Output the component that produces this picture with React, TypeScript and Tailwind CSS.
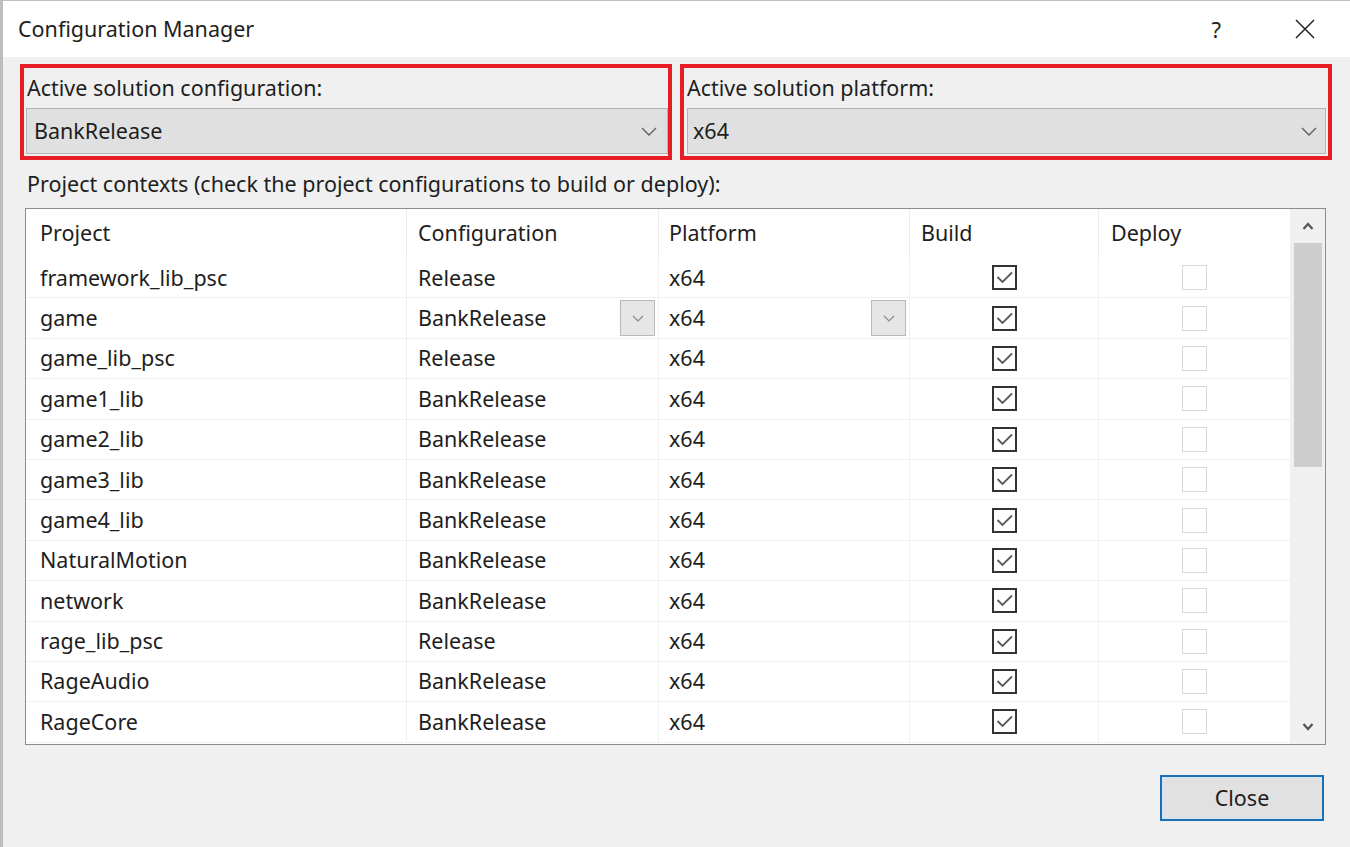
import React from "react";

const rows: [string, string][] = [
  ["framework_lib_psc", "Release"],
  ["game", "BankRelease"],
  ["game_lib_psc", "Release"],
  ["game1_lib", "BankRelease"],
  ["game2_lib", "BankRelease"],
  ["game3_lib", "BankRelease"],
  ["game4_lib", "BankRelease"],
  ["NaturalMotion", "BankRelease"],
  ["network", "BankRelease"],
  ["rage_lib_psc", "Release"],
  ["RageAudio", "BankRelease"],
  ["RageCore", "BankRelease"],
];

const font = { fontFamily: '"Noto Sans", "Open Sans", sans-serif' };

function Chevron() {
  return (
    <svg width="16" height="9" viewBox="0 0 16 9">
      <path d="M1 1 L8 8 L15 1" fill="none" stroke="#606060" strokeWidth="1.4" />
    </svg>
  );
}

function SmallChevron() {
  return (
    <svg width="12" height="7" viewBox="0 0 12 7">
      <path d="M1 1 L6 6 L11 1" fill="none" stroke="#8a8a8a" strokeWidth="1.2" />
    </svg>
  );
}

function CheckOn() {
  return (
    <div className="w-[25px] h-[25px] border-2 border-[#333333] bg-white flex items-center justify-center">
      <svg width="19" height="15" viewBox="0 0 19 15">
        <path d="M2.5 7 L7.5 12 L17 2.5" fill="none" stroke="#5a5a5a" strokeWidth="1.8" />
      </svg>
    </div>
  );
}

function CheckOff() {
  return <div className="w-[25px] h-[25px] border-[1.5px] border-[#d8d8d8] bg-white" />;
}

export default function App() {
  return (
    <div
      className="w-[1350px] h-[847px] bg-[#f0f0f0] border-l-[3px] border-t border-[#bdbdbd] flex flex-col text-[21.5px] text-[#1e1e1e] overflow-hidden"
      style={font}
    >
      {/* Title bar */}
      <div className="h-[56px] bg-white flex items-center pl-[15px] pr-[34px] shrink-0">
        <span className="flex-1 leading-none">Configuration Manager</span>
        <span className="text-[22px] mr-[73px] leading-none">?</span>
        <svg width="22" height="22" viewBox="0 0 22 22">
          <path d="M2 2 L20 20 M20 2 L2 20" stroke="#222" strokeWidth="1.5" />
        </svg>
      </div>

      {/* Red boxes */}
      <div className="flex gap-[8px] ml-[17px] mt-[7px]">
        <div className="w-[652px] h-[96px] border-4 border-[#e81c24] flex flex-col">
          <div className="h-[40px] flex items-center pl-[3px]">Active solution configuration:</div>
          <div className="ml-[2px] h-[46px] bg-[#e0e0e0] border border-[#b4b4b4] flex items-center pl-[7px] pr-[10px]">
            <span className="flex-1">BankRelease</span>
            <Chevron />
          </div>
        </div>
        <div className="w-[652px] h-[96px] border-4 border-[#e81c24] flex flex-col">
          <div className="h-[40px] flex items-center pl-[3px]">Active solution platform:</div>
          <div className="ml-[3px] mr-[2px] h-[46px] bg-[#e0e0e0] border border-[#b4b4b4] flex items-center pl-[5px] pr-[8px]">
            <span className="flex-1">x64</span>
            <Chevron />
          </div>
        </div>
      </div>

      <div className="h-[48px] flex items-center pl-[24px]">
        Project contexts (check the project configurations to build or deploy):
      </div>

      {/* Table */}
      <div className="ml-[22px] w-[1301px] h-[537px] border border-[#8c8c8c] bg-white flex overflow-hidden">
        <div className="flex-1 flex flex-col">
          <div className="h-[49px] flex shrink-0">
            <div className="w-[381px] pl-[14px] flex items-center border-r border-[#ececec]">Project</div>
            <div className="w-[252px] pl-[11px] flex items-center border-r border-[#ececec]">Configuration</div>
            <div className="w-[251px] pl-[10px] flex items-center border-r border-[#ececec]">Platform</div>
            <div className="w-[189px] pl-[11px] flex items-center border-r border-[#ececec]">Build</div>
            <div className="w-[191px] pl-[12px] flex items-center">Deploy</div>
          </div>
          {rows.map(([name, cfg], i) => (
            <div key={name} className="h-[40.4px] flex shrink-0 border-b border-[#f0f0f0]">
              <div className="w-[381px] pl-[14px] flex items-center border-r border-[#f0f0f0]">{name}</div>
              <div className="w-[252px] pl-[11px] pr-[3px] flex items-center border-r border-[#f0f0f0]">
                <span className="flex-1">{cfg}</span>
                {i === 1 && (
                  <div className="w-[35px] h-[36px] bg-[#e6e6e6] border border-[#b9b9b9] flex items-center justify-center">
                    <SmallChevron />
                  </div>
                )}
              </div>
              <div className="w-[251px] pl-[10px] pr-[3px] flex items-center border-r border-[#f0f0f0]">
                <span className="flex-1">x64</span>
                {i === 1 && (
                  <div className="w-[35px] h-[36px] bg-[#e6e6e6] border border-[#b9b9b9] flex items-center justify-center">
                    <SmallChevron />
                  </div>
                )}
              </div>
              <div className="w-[189px] flex items-center justify-center border-r border-[#f0f0f0]">
                <CheckOn />
              </div>
              <div className="w-[191px] flex items-center justify-center">
                <CheckOff />
              </div>
            </div>
          ))}
        </div>
        {/* Scrollbar */}
        <div className="w-[35px] bg-[#f0f0f0] flex flex-col items-center">
          <div className="h-[34px] w-full flex items-center justify-center">
            <svg width="12" height="8" viewBox="0 0 12 8">
              <path d="M1.5 7 L6 2 L10.5 7" fill="none" stroke="#555" strokeWidth="2.2" />
            </svg>
          </div>
          <div className="w-[28px] h-[224px] bg-[#cdcdcd]" />
          <div className="flex-1" />
          <div className="h-[34px] w-full flex items-center justify-center">
            <svg width="12" height="8" viewBox="0 0 12 8">
              <path d="M1.5 1 L6 6 L10.5 1" fill="none" stroke="#555" strokeWidth="2.2" />
            </svg>
          </div>
        </div>
      </div>

      {/* Close */}
      <div className="flex justify-end pr-[26px] mt-[30px]">
        <div className="w-[164px] h-[46px] border-2 border-[#1a6fb5] bg-[#e1e1e1] flex items-center justify-center shadow-[inset_0_0_0_1px_#cfe6fb]">
          Close
        </div>
      </div>
    </div>
  );
}
